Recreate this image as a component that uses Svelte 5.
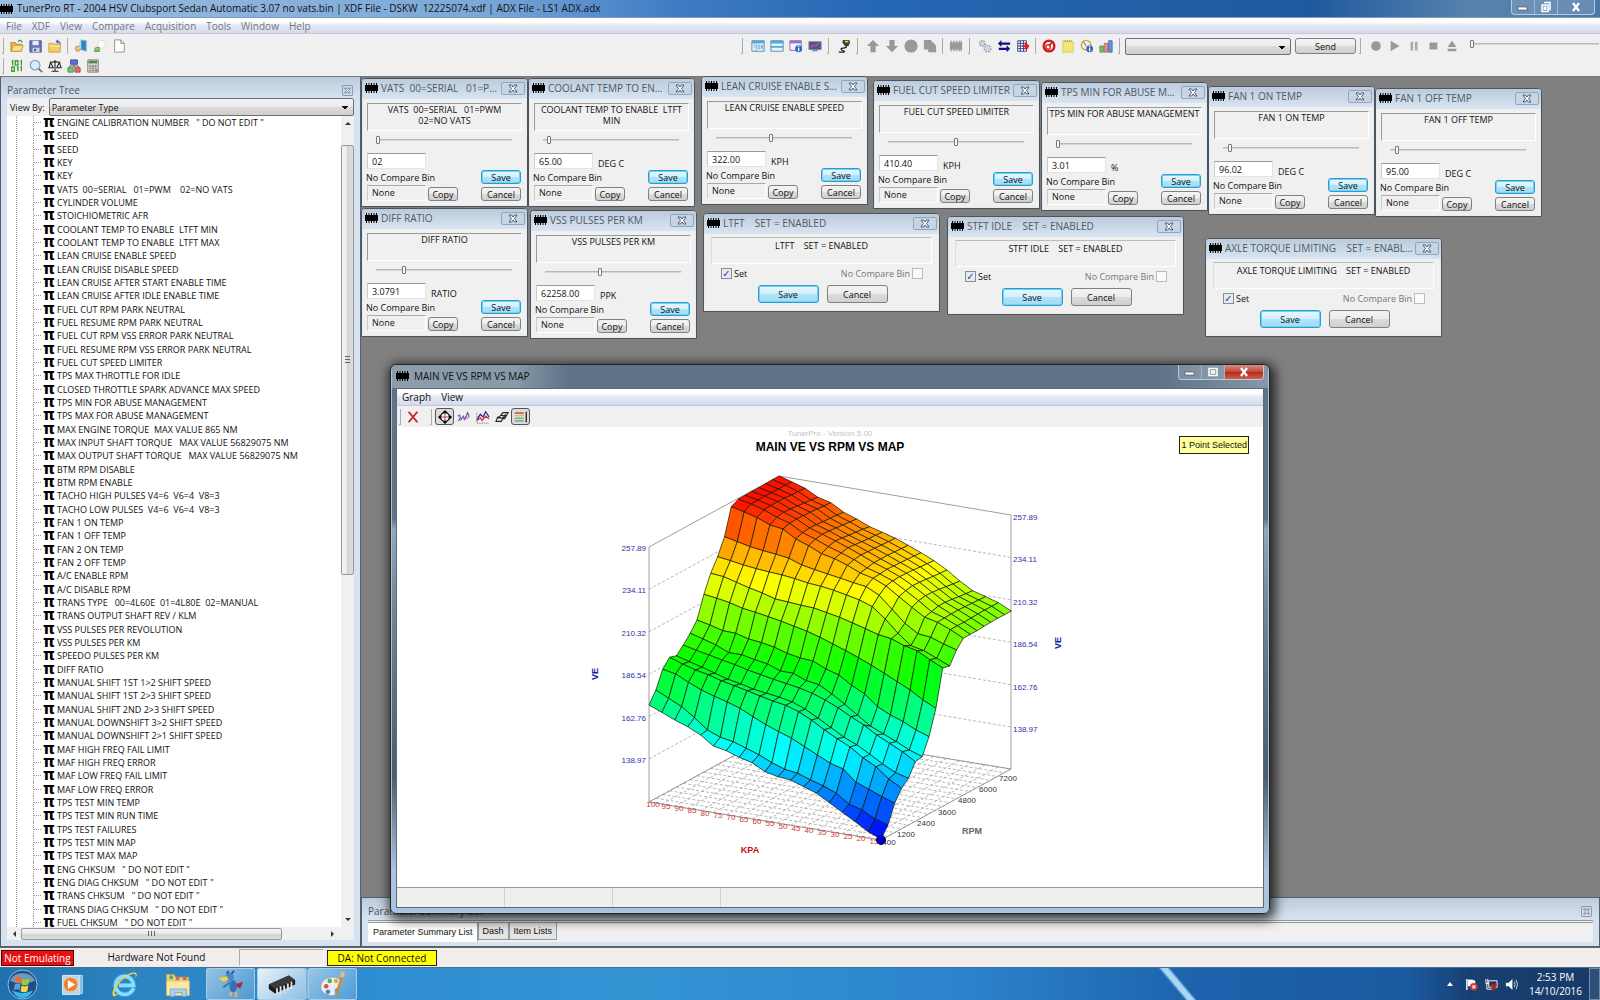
<script lang="ts">
	const menus = ['File', 'XDF', 'View', 'Compare', 'Acquisition', 'Tools', 'Window', 'Help'];

	const parameters = [
		'ENGINE CALIBRATION NUMBER   " DO NOT EDIT "',
		'SEED',
		'SEED',
		'KEY',
		'KEY',
		'VATS  00=SERIAL   01=PWM    02=NO VATS',
		'CYLINDER VOLUME',
		'STOICHIOMETRIC AFR',
		'COOLANT TEMP TO ENABLE  LTFT MIN',
		'COOLANT TEMP TO ENABLE  LTFT MAX',
		'LEAN CRUISE ENABLE SPEED',
		'LEAN CRUISE DISABLE SPEED',
		'LEAN CRUISE AFTER START ENABLE TIME',
		'LEAN CRUISE AFTER IDLE ENABLE TIME',
		'FUEL CUT RPM PARK NEUTRAL',
		'FUEL RESUME RPM PARK NEUTRAL',
		'FUEL CUT RPM VSS ERROR PARK NEUTRAL',
		'FUEL RESUME RPM VSS ERROR PARK NEUTRAL',
		'FUEL CUT SPEED LIMITER',
		'TPS MAX THROTTLE FOR IDLE',
		'CLOSED THROTTLE SPARK ADVANCE MAX SPEED',
		'TPS MIN FOR ABUSE MANAGEMENT',
		'TPS MAX FOR ABUSE MANAGEMENT',
		'MAX ENGINE TORQUE  MAX VALUE 865 NM',
		'MAX INPUT SHAFT TORQUE   MAX VALUE 56829075 NM',
		'MAX OUTPUT SHAFT TORQUE   MAX VALUE 56829075 NM',
		'BTM RPM DISABLE',
		'BTM RPM ENABLE',
		'TACHO HIGH PULSES V4=6  V6=4  V8=3',
		'TACHO LOW PULSES  V4=6  V6=4  V8=3',
		'FAN 1 ON TEMP',
		'FAN 1 OFF TEMP',
		'FAN 2 ON TEMP',
		'FAN 2 OFF TEMP',
		'A/C ENABLE RPM',
		'A/C DISABLE RPM',
		'TRANS TYPE   00=4L60E  01=4L80E  02=MANUAL',
		'TRANS OUTPUT SHAFT REV / KLM',
		'VSS PULSES PER REVOLUTION',
		'VSS PULSES PER KM',
		'SPEEDO PULSES PER KM',
		'DIFF RATIO',
		'MANUAL SHIFT 1ST 1>2 SHIFT SPEED',
		'MANUAL SHIFT 1ST 2>3 SHIFT SPEED',
		'MANUAL SHIFT 2ND 2>3 SHIFT SPEED',
		'MANUAL DOWNSHIFT 3>2 SHIFT SPEED',
		'MANUAL DOWNSHIFT 2>1 SHIFT SPEED',
		'MAF HIGH FREQ FAIL LIMIT',
		'MAF HIGH FREQ ERROR',
		'MAF LOW FREQ FAIL LIMIT',
		'MAF LOW FREQ ERROR',
		'TPS TEST MIN TEMP',
		'TPS TEST MIN RUN TIME',
		'TPS TEST FAILURES',
		'TPS TEST MIN MAP',
		'TPS TEST MAX MAP',
		'ENG CHKSUM   " DO NOT EDIT "',
		'ENG DIAG CHKSUM   " DO NOT EDIT "',
		'TRANS CHKSUM   " DO NOT EDIT "',
		'TRANS DIAG CHKSUM   " DO NOT EDIT "',
		'FUEL CHKSUM   " DO NOT EDIT "'
	];

	// Window positions are relative to the MDI desktop
	const scalars = [
		{ x: 0, y: 1, title: 'VATS  00=SERIAL   01=PWM    02=NO VATS', text: 'VATS  00=SERIAL   01=PWM\n02=NO VATS', pos: 0, value: '02', unit: '' },
		{ x: 167, y: 1, title: 'COOLANT TEMP TO ENABLE  LTFT MIN', text: 'COOLANT TEMP TO ENABLE  LTFT\nMIN', pos: 3, value: '65.00', unit: 'DEG C' },
		{ x: 340, y: -1, title: 'LEAN CRUISE ENABLE SPEED', text: 'LEAN CRUISE ENABLE SPEED', pos: 40, value: '322.00', unit: 'KPH' },
		{ x: 512, y: 3, title: 'FUEL CUT SPEED LIMITER', text: 'FUEL CUT SPEED LIMITER', pos: 50, value: '410.40', unit: 'KPH' },
		{ x: 680, y: 5, title: 'TPS MIN FOR ABUSE MANAGEMENT', text: 'TPS MIN FOR ABUSE MANAGEMENT', pos: 0, value: '3.01', unit: '%' },
		{ x: 847, y: 9, title: 'FAN 1 ON TEMP', text: 'FAN 1 ON TEMP', pos: 4, value: '96.02', unit: 'DEG C' },
		{ x: 1014, y: 11, title: 'FAN 1 OFF TEMP', text: 'FAN 1 OFF TEMP', pos: 4, value: '95.00', unit: 'DEG C' },
		{ x: 0, y: 131, title: 'DIFF RATIO', text: 'DIFF RATIO', pos: 20, value: '3.0791', unit: 'RATIO' },
		{ x: 169, y: 133, title: 'VSS PULSES PER KM', text: 'VSS PULSES PER KM', pos: 40, value: '62258.00', unit: 'PPK' }
	];

	const flags = [
		{ x: 342, y: 136, title: 'LTFT    SET = ENABLED' },
		{ x: 586, y: 139, title: 'STFT IDLE    SET = ENABLED' },
		{ x: 844, y: 161, title: 'AXLE TORQUE LIMITING    SET = ENABLED' }
	];

	// Screen height of every mesh node, one row per RPM step, one column per KPA step
	const mesh = [
		[855, 877, 900, 920, 945, 978, 992, 1012, 1028, 1055, 1070, 1080, 1100, 1120, 1148, 1177, 1205, 1235, 1258],
		[810, 835, 860, 893, 930, 952, 965, 985, 1004, 1028, 1048, 1060, 1080, 1098, 1120, 1153, 1170, 1197, 1215],
		[748, 762, 787, 810, 829, 846, 865, 890, 914, 935, 955, 980, 1005, 1030, 1047, 1087, 1108, 1130, 1150],
		[712, 732, 750, 764, 782, 797, 812, 828, 843, 856, 875, 900, 929, 956, 981, 1013, 1040, 1077, 1105],
		[707, 725, 742, 760, 778, 792, 808, 820, 832, 846, 868, 895, 923, 952, 975, 1003, 1032, 1058, 1075],
		[675, 691, 705, 720, 734, 750, 764, 778, 791, 804, 820, 840, 863, 890, 915, 945, 970, 995, 1025],
		[640, 657, 675, 698, 704, 719, 732, 753, 760, 782, 794, 822, 853, 886, 919, 942, 965, 990, 1010],
		[600, 615, 632, 640, 657, 668, 682, 700, 714, 723, 747, 765, 796, 822, 860, 885, 905, 930, 950],
		[523, 535, 548, 565, 577, 590, 604, 619, 634, 652, 672, 692, 713, 736, 760, 785, 810, 840, 865],
		[460, 470, 487, 504, 519, 537, 546, 556, 564, 578, 592, 609, 626, 644, 656, 677, 692, 719, 744],
		[410, 422, 435, 446, 456, 465, 476, 489, 499, 511, 525, 540, 560, 597, 640, 677, 692, 715, 738],
		[350, 365, 380, 392, 403, 415, 435, 449, 462, 475, 488, 500, 526, 568, 610, 641, 652, 672, 690],
		[260, 276, 293, 315, 327, 357, 377, 401, 416, 436, 459, 475, 498, 530, 562, 592, 607, 629, 655],
		[238, 252, 270, 292, 310, 338, 358, 380, 399, 419, 444, 462, 483, 512, 542, 575, 594, 617, 643],
		[226, 240, 257, 277, 297, 324, 343, 363, 383, 405, 428, 448, 470, 497, 527, 558, 582, 607, 632],
		[214, 229, 245, 267, 287, 314, 333, 354, 374, 395, 417, 438, 460, 487, 517, 547, 570, 594, 619],
		[203, 218, 235, 258, 277, 305, 324, 346, 365, 385, 406, 428, 450, 478, 508, 538, 560, 582, 607],
		[191, 207, 225, 249, 267, 295, 315, 337, 356, 375, 396, 418, 441, 469, 500, 530, 550, 570, 595],
		[179, 196, 215, 240, 258, 286, 306, 328, 346, 365, 386, 408, 431, 460, 492, 521, 540, 559, 584],
		[168, 186, 205, 232, 248, 277, 297, 320, 337, 355, 376, 398, 422, 450, 483, 512, 530, 548, 573]
	];
	const kpaSteps = 18;
	const rpmSteps = 19;

	function project(j: number, r: number) {
		const x = 207 + (696 * j) / kpaSteps + (391 * r) / rpmSteps;
		return { x: 183 + x / 3, y: mesh[r][j] / 3 - 7 };
	}

	function floorPoint(j: number, r: number) {
		return {
			x: 252 + (232 * j) / kpaSteps + (130 * r) / rpmSteps,
			y: 375 + (38 * j) / kpaSteps - (71 * r) / rpmSteps
		};
	}

	function cellColor(j: number, r: number) {
		let level = 0;
		for (const [a, b] of [[j, r], [j + 1, r], [j, r + 1], [j + 1, r + 1]]) {
			level += (floorPoint(a, b).y - project(a, b).y) / 254 / 4;
		}
		const hue = Math.round(240 * (1 - Math.min(1, Math.max(0, level - 0.01))));
		return `hsl(${hue}, 100%, 50%)`;
	}

	// Painter's order: back rows first
	const cells: { points: string; fill: string }[] = [];
	for (let r = rpmSteps - 1; r >= 0; r--) {
		for (let j = 0; j < kpaSteps; j++) {
			const corners = [project(j, r), project(j + 1, r), project(j + 1, r + 1), project(j, r + 1)];
			cells.push({
				points: corners.map((p) => `${p.x.toFixed(1)},${p.y.toFixed(1)}`).join(' '),
				fill: cellColor(j, r)
			});
		}
	}

	const floorLines = [
		...Array.from({ length: kpaSteps + 1 }, (_, j) => [floorPoint(j, 0), floorPoint(j, rpmSteps)]),
		...Array.from({ length: rpmSteps + 1 }, (_, r) => [floorPoint(0, r), floorPoint(kpaSteps, r)])
	];

	const ticks = ['257.89', '234.11', '210.32', '186.54', '162.76', '138.97'];
	const kpaLabels = Array.from({ length: 18 }, (_, i) => 100 - 5 * i);
	const rpmLabels = [1200, 2400, 3600, 4800, 6000, 7200];
</script>

{#snippet chip()}
	<svg class="chip" viewBox="0 0 13 10" aria-hidden="true">
		<path d="M0 2h13v6H0z" />
		<path d="M1.500 0v10M4 0v10M6.500 0v10M9 0v10M11.500 0v10" stroke="#000" stroke-dasharray="10" />
	</svg>
{/snippet}

{#snippet cross()}
	<svg class="cross" viewBox="0 0 10 9" aria-hidden="true">
		<path d="M1 1h2.500l1.500 2 1.500-2H9L6.500 4.500 9 8H6.500L5 6 3.500 8H1l2.500-3.500z" fill="#fff" stroke="#4c5a6c" />
	</svg>
{/snippet}

{#snippet caption(title: string)}
	<header class="caption">
		{@render chip()}
		<h2>{title}</h2>
		<button class="close" aria-label="Close">{@render cross()}</button>
	</header>
{/snippet}

<div class="app">
	<header class="titlebar">
		{@render chip()}
		<h1>TunerPro RT - 2004 HSV Clubsport Sedan Automatic 3.07 no vats.bin | XDF File - DSKW  12225074.xdf | ADX File - LS1 ADX.adx</h1>
		<div class="sysbuttons">
			<button aria-label="Minimize"><svg viewBox="0 0 12 12"><rect x="1" y="6" width="9" height="3" fill="#fff" stroke="#445" stroke-width=".6" /></svg></button>
			<button aria-label="Restore"><svg viewBox="0 0 12 12"><path d="M4 1.500h6v7H8M2 4h6v6.500H2z M4.200 6.200h1.600v2H4.200z" fill="none" stroke="#fff" stroke-width="1.500" /></svg></button>
			<button class="wide" aria-label="Close"><svg viewBox="0 0 12 12"><path d="M3 2l6 8M9 2l-6 8" stroke="#fff" stroke-width="2.200" /></svg></button>
		</div>
	</header>

	<nav class="menubar">
		{#each menus as item}
			<button>{item}</button>
		{/each}
	</nav>

	<div class="toolbars">
		<div class="toolrow">
			<div class="tools">
				<i class="grip"></i>
				<button aria-label="Open bin"><svg viewBox="0 0 16 16"><path d="M1 14V4h5l1 2h6v8z" fill="#e9b84a" stroke="#b98a2c" /><path d="M1 14l3-7h11l-2 7z" fill="#fbdc86" stroke="#c29434" /><path d="M9 3c2-2 4-2 5 1" fill="none" stroke="#4c9a44" stroke-width="1.500" /></svg></button>
				<button aria-label="Save bin"><svg viewBox="0 0 16 16"><path d="M1 2h13v13H1z" fill="#6c74b8" stroke="#4c5590" /><path d="M4 2h7v5H4z" fill="#e6ebf7" /><path d="M4 10h8v5H4z" fill="#cdd3e8" /><path d="M6 11h2v3H6z" fill="#444d88" /></svg></button>
				<button aria-label="Close bin"><svg viewBox="0 0 16 16"><path d="M1 5h5l1 1h7v9H1z" fill="#f6cd69" stroke="#c6983c" /><path d="M1 8h13" stroke="#fff1b8" /><path d="M14 6c0-3-2-4-4-3l1-2M10 3l2 2" fill="none" stroke="#4a55b0" stroke-width="1.300" /></svg></button>
				<i class="sep"></i>
				<button aria-label="Select XDF"><svg viewBox="0 0 16 16"><path d="M8 1l6 1v12l-6-2z" fill="#2f86c4" stroke="#7fb2d8" /><circle cx="4.500" cy="11" r="3" fill="#f0c078" stroke="#b88a50" /><path d="M7 3v8" stroke="#b8d6ec" stroke-width="2" /></svg></button>
				<button aria-label="Reload"><svg viewBox="0 0 16 16"><circle cx="10" cy="6" r="4.500" fill="#fafafa" stroke="#ccc" stroke-dasharray="2 1" /><path d="M2 14c0-4 2-5 5-4v4zM4 12h2" fill="#cfe4c4" stroke="#6aa84f" stroke-width="1.500" /></svg></button>
				<button aria-label="New"><svg viewBox="0 0 16 16"><path d="M3 1h7l4 4v10H3z" fill="#fff" stroke="#888" /><path d="M10 1v4h4" fill="none" stroke="#888" /></svg></button>
			</div>
			<div class="tools right">
				<i class="grip"></i>
				<button aria-label="Parameter tree"><svg viewBox="0 0 16 16"><path d="M1 2h14v12H1z" fill="#e8f3fb" stroke="#3f86b8" /><path d="M1 2h14v3H1z" fill="#5ba4d6" /><path d="M6 5v9M3 7h2M3 9h2M8 7h2v4H8zM12 7h1v4h-1z" stroke="#7aa9cc" fill="none" /></svg></button>
				<button aria-label="Parameter list"><svg viewBox="0 0 16 16"><path d="M1 2h14v12H1z" fill="#e8f3fb" stroke="#3f86b8" /><path d="M1 2h14v3H1zM1 8h14v2H1z" fill="#5ba4d6" /></svg></button>
				<button aria-label="Item info"><svg viewBox="0 0 16 16"><path d="M1 2h13v11H1z" fill="#f6f2fa" stroke="#8a62b8" /><path d="M1 2h13v3H1z" fill="#9d6cc9" /><circle cx="11" cy="11" r="4" fill="#2b6ac4" /><path d="M11 8v1M11 10v4" stroke="#fff" stroke-width="1.500" /></svg></button>
				<button aria-label="Monitor"><svg viewBox="0 0 16 16"><path d="M1 3h14v9H1z" fill="#4a5590" stroke="#7d88b0" /><path d="M3 10l3-3 3 1 4-4" fill="none" stroke="#d84a70" stroke-width="1.500" /><path d="M6 12h4l2 2H4z" fill="#888" /></svg></button>
				<i class="grip"></i>
				<button aria-label="Connect"><svg viewBox="0 0 16 16"><path d="M7 1h7l1 3-2 4H9L6 4z" fill="#3f3c28" /><path d="M9 3h4" stroke="#d8c860" stroke-width="2" /><path d="M11 8c0 4-8 1-6 4s4 0 3 3H2" fill="none" stroke="#222" stroke-width="1.500" /></svg></button>
				<i class="grip"></i>
				<button aria-label="Upload"><svg viewBox="0 0 16 16"><path d="M8 1l7 7h-4v7H5V8H1z" fill="#999" /></svg></button>
				<button aria-label="Download"><svg viewBox="0 0 16 16"><path d="M8 15l7-7h-4V1H5v7H1z" fill="#999" /></svg></button>
				<button aria-label="Verify"><svg viewBox="0 0 16 16"><circle cx="8" cy="8" r="7.500" fill="#999" /></svg></button>
				<button aria-label="Copy bin"><svg viewBox="0 0 16 16"><path d="M1 1h8l2 3h1l3 4v7H6v-3H1z" fill="#999" /></svg></button>
				<i class="sep"></i>
				<button aria-label="Emulator"><svg viewBox="0 0 16 16"><path d="M1 4h14v8H1z" fill="#999" /><path d="M2.500 2v12M5.500 2v12M8.500 2v12M11.500 2v12M14 2v12" stroke="#999" stroke-width="1.500" /></svg></button>
				<i class="grip"></i>
				<button aria-label="Settings"><svg viewBox="0 0 16 16"><circle cx="5" cy="5" r="3" fill="none" stroke="#8fa3bb" stroke-width="2" stroke-dasharray="2 1" /><circle cx="11" cy="11" r="3.500" fill="none" stroke="#8fa3bb" stroke-width="2" stroke-dasharray="2 1" /><circle cx="5" cy="5" r="2" fill="#c4d4e6" /><circle cx="11" cy="11" r="2" fill="#c4d4e6" /></svg></button>
				<button aria-label="Swap"><svg viewBox="0 0 16 16"><path d="M1 5l4-4v3h10v2.500H5V9zM15 11l-4-4v3H2v2.500h9V15z" fill="#10107c" /></svg></button>
				<button aria-label="Goto address"><svg viewBox="0 0 16 16"><path d="M2 2h10v12H2zM2 5h10M2 8h10M2 11h10M5 2v12M8.500 2v12" fill="#fff" stroke="#223a8c" /><path d="M7 8h8M11 4v8M13 6v5" stroke="#e02020" stroke-width="2" /></svg></button>
				<i class="sep"></i>
				<button aria-label="Stop acquisition"><svg viewBox="0 0 16 16"><circle cx="8" cy="8" r="6" fill="#fff" stroke="#d02020" stroke-width="3" /><circle cx="7" cy="9" r="2.500" fill="none" stroke="#d02020" stroke-width="1.500" /><path d="M8 8l4-5" stroke="#d02020" stroke-width="2" /></svg></button>
				<button aria-label="Notes"><svg viewBox="0 0 16 16"><path d="M2 3h12v12H2z" fill="#f4e678" stroke="#dccb50" /><path d="M3 2h10" stroke="#a89a40" stroke-width="2" stroke-dasharray="1 1" /></svg></button>
				<button aria-label="Gauges"><svg viewBox="0 0 16 16"><circle cx="7" cy="7" r="5.500" fill="#f6efe0" stroke="#cfa040" stroke-width="1.500" /><path d="M7 8L4 3" stroke="#555" /><circle cx="11" cy="11" r="4" fill="#3a6cb4" /><path d="M11 8v1M11 10v4" stroke="#fff" stroke-width="1.500" /></svg></button>
				<button aria-label="Histogram"><svg viewBox="0 0 16 16"><path d="M1 8h4v7H1z" fill="#86b86a" stroke="#5d8f48" /><path d="M6 5h4v10H6z" fill="#e09090" stroke="#b06060" /><path d="M11 2h4v13h-4z" fill="#6c94d8" stroke="#3f68b0" /></svg></button>
				<i class="grip"></i>
				<select class="combo command" aria-label="Command"><option></option></select>
				<button class="push send">Send</button>
				<i class="grip"></i>
				<button aria-label="Record"><svg viewBox="0 0 16 16"><circle cx="8" cy="8" r="5.500" fill="#999" /></svg></button>
				<button aria-label="Play"><svg viewBox="0 0 16 16"><path d="M3 2l10 6-10 6z" fill="#999" /></svg></button>
				<button aria-label="Pause"><svg viewBox="0 0 16 16"><path d="M4 3h3v10H4zM9 3h3v10H9z" fill="#aaa" /></svg></button>
				<button aria-label="Stop"><svg viewBox="0 0 16 16"><path d="M4 4h9v8H4z" fill="#999" /></svg></button>
				<button aria-label="Eject"><svg viewBox="0 0 16 16"><path d="M8 2l5 7H3zM3 11h10v3H3z" fill="#999" /></svg></button>
				<input class="seek" type="range" value="0" aria-label="Log position" />
			</div>
		</div>
		<div class="toolrow">
			<div class="tools">
				<i class="grip"></i>
				<button aria-label="Hex editor"><svg viewBox="0 0 16 16"><path d="M2 3l1-1v5M6 2h3v5H6zM12 3l1-1v5M2 9h3v5H2zM8 10l1-1v5M12 10l1-1v5" fill="none" stroke="#3d9a30" stroke-width="1.500" /></svg></button>
				<button aria-label="Find"><svg viewBox="0 0 16 16"><circle cx="7" cy="7" r="5.500" fill="#d6ecf8" stroke="#88a4b8" stroke-width="1.500" /><path d="M11 11l4 4" stroke="#777" stroke-width="2" /></svg></button>
				<button aria-label="Compare"><svg viewBox="0 0 16 16"><path d="M8 1v13M4 14h8M2 4l6-1 6 1M3 4l-2 6h5zM13 4l-3 6h5z" fill="none" stroke="#222" stroke-width="1.200" /></svg></button>
				<button aria-label="Categories"><svg viewBox="0 0 16 16"><path d="M8 6v4M3 10V8h10v2" fill="none" stroke="#555" /><path d="M4 1h8v5H4z" fill="#5873d8" stroke="#3a50a8" /><path d="M1 10h6v5H1z" fill="#72c47a" stroke="#3f8f48" /><path d="M9 10h6v5H9z" fill="#e07070" stroke="#a84040" /></svg></button>
				<button aria-label="Calculator"><svg viewBox="0 0 16 16"><path d="M2 1h12v14H2z" fill="#dcd8c8" stroke="#777" /><path d="M3 2h10v3H3z" fill="#4c8a50" /><path d="M4 8h8M4 10.500h8M4 13h8" stroke="#777" stroke-width="1.500" stroke-dasharray="2 1" /><path d="M11 12h2v2h-2z" fill="#c05050" /></svg></button>
			</div>
		</div>
	</div>

	<main>
		<aside class="tree-panel">
			<header class="dock-caption">
				<h2>Parameter Tree</h2>
				<button class="dock-close" aria-label="Close panel">{@render cross()}</button>
			</header>
			<div class="view-by">
				<label for="view-by">View By:</label>
				<select id="view-by" class="combo"><option>Parameter Type</option></select>
			</div>
			<div class="tree-body">
				<ul>
					{#each parameters as name}
						<li><i class="branch"></i><b>π</b><span>{name}</span></li>
					{/each}
				</ul>
				<div class="vscroll">
					<button aria-label="Scroll up"><svg viewBox="0 0 6 6"><path d="M0 5l3-3 3 3z" /></svg></button>
					<div class="vthumb"></div>
					<button aria-label="Scroll down"><svg viewBox="0 0 6 6"><path d="M0 1l3 3 3-3z" /></svg></button>
				</div>
			</div>
			<div class="hscroll">
				<button aria-label="Scroll left"><svg viewBox="0 0 6 6"><path d="M5 0L2 3l3 3z" /></svg></button>
				<div class="hthumb"></div>
				<button aria-label="Scroll right"><svg viewBox="0 0 6 6"><path d="M1 0l3 3-3 3z" /></svg></button>
			</div>
		</aside>

		<section class="workspace">
			<div class="desktop">
				{#each scalars as item, i}
					<section class="window" style:left="{item.x}px" style:top="{item.y}px">
						{@render caption(item.title)}
						<p class="description">{item.text}</p>
						<input class="slider" type="range" value={item.pos} aria-label={item.title} />
						<div class="scalar-form">
							<input class="value" id="value-{i}" value={item.value} />
							<label class="unit" for="value-{i}">{item.unit}</label>
							<span class="compare">No Compare Bin</span>
							<button class="push primary">Save</button>
							<div class="compare-row">
								<span class="none">None</span>
								<button class="push copy">Copy</button>
							</div>
							<button class="push cancel">Cancel</button>
						</div>
					</section>
				{/each}

				{#each flags as item}
					<section class="window flag" style:left="{item.x}px" style:top="{item.y}px">
						{@render caption(item.title)}
						<p class="description">{item.title}</p>
						<div class="checks">
							<label><input type="checkbox" checked /> Set</label>
							<label class="off">No Compare Bin <input type="checkbox" disabled /></label>
						</div>
						<div class="actions">
							<button class="push primary">Save</button>
							<button class="push">Cancel</button>
						</div>
					</section>
				{/each}

				<section class="graph-window">
					<header class="graph-caption">
						{@render chip()}
						<h2>MAIN VE VS RPM VS MAP</h2>
						<div class="sysbuttons">
							<button aria-label="Minimize"><svg viewBox="0 0 12 12"><rect x="1" y="6" width="9" height="3" fill="#fff" stroke="#445" stroke-width=".6" /></svg></button>
							<button aria-label="Maximize"><svg viewBox="0 0 12 12"><path d="M2 2.500h8v7H2zM4.500 5h3v2h-3z" fill="none" stroke="#fff" stroke-width="1.500" /></svg></button>
							<button class="wide red" aria-label="Close"><svg viewBox="0 0 12 12"><path d="M3 2l6 8M9 2l-6 8" stroke="#fff" stroke-width="2.200" /></svg></button>
						</div>
					</header>
					<div class="graph-client">
						<nav class="graph-menu">
							<button>Graph</button>
							<button>View</button>
						</nav>
						<div class="graph-tools tools">
							<i class="grip"></i>
							<button class="exit" aria-label="Close graph"><svg viewBox="0 0 16 16"><path d="M3 2l10 12M13 2L3 14" stroke="#d02020" stroke-width="2.200" /></svg></button>
							<i class="grip"></i>
							<button class="pressed" aria-label="Rotate"><svg viewBox="0 0 16 16"><circle cx="8" cy="8" r="5" fill="#fff" stroke="#000" stroke-width="1.500" /><path d="M8 3v10M3 8h10" stroke="#a03030" /><path d="M8 0l3 3H5zM8 16l3-3H5zM0 8l3-3v6zM16 8l-3-3v6z" /></svg></button>
							<button aria-label="Points"><svg viewBox="0 0 16 16"><path d="M1 7l2-1 1 3-2 3M4 12l3-5 2 4 3-8 2 5" fill="none" stroke="#5a5ac0" stroke-width="1.300" /><path d="M1 13l3-4M7 11l3-4 2 3 2-7" fill="none" stroke="#b05080" stroke-dasharray="3 1" /></svg></button>
							<button aria-label="Lines"><svg viewBox="0 0 16 16"><path d="M1 11l4-6 3 3 3-6 4 6" fill="none" stroke="#2a2a90" stroke-width="1.500" /><path d="M1 12l4-3 2 3 4-5 4 3" fill="none" stroke="#d03030" stroke-width="1.500" /><path d="M1 15h14M1 3v12" stroke="#555" stroke-dasharray="1 1" /></svg></button>
							<button aria-label="Surface"><svg viewBox="0 0 16 16"><path d="M1 13h6l2-3 2 0 4-7H9L5 8H3zM3 9h8M6 6l7 1M7 13l5-8" fill="none" stroke="#222" stroke-width="1.200" /></svg></button>
							<button class="pressed" aria-label="Colors"><svg viewBox="0 0 16 16"><path d="M1 3.500h10" stroke="#c03030" stroke-width="1.500" /><path d="M1 6.500h10" stroke="#e0c040" stroke-width="1.500" /><path d="M1 9.500h10" stroke="#60c050" stroke-width="1.500" /><path d="M1 12.500h10" stroke="#50a0a0" stroke-width="1.500" /><path d="M14 2v12" stroke="#222" stroke-width="1.500" /></svg></button>
						</div>
						<div class="plot">
							<span class="selection">1 Point Selected</span>
							<svg viewBox="0 0 866 460" role="img" aria-label="MAIN VE VS RPM VS MAP">
								<text class="version" x="433" y="9">TunerPro - Version 5.00</text>
								<text class="title" x="433" y="24">MAIN VE VS RPM VS MAP</text>

								<g class="dashed">
									{#each floorLines as [from, to]}
										<line x1={from.x} y1={from.y} x2={to.x} y2={to.y} />
									{/each}
									{#each ticks as _, i}
										{#if i > 0}
											<polyline points="252,{120 + 42.4 * i} 382,{49 + 42.4 * i} 614,{88 + 42.4 * i}" />
										{/if}
									{/each}
								</g>
								<path class="frame" d="M252 375V120L382 49l232 39v254M252 375l232 38 130-71-232-38z" />

								<g class="surface">
									{#each cells as cell}
										<polygon points={cell.points} fill={cell.fill} />
									{/each}
								</g>

								{#each ticks as tick, i}
									<text class="tick end" x="249" y={124 + Math.round(42.4 * i)}>{tick}</text>
									<text class="tick" x="616" y={93 + Math.round(42.4 * i)}>{tick}</text>
								{/each}
								{#each kpaLabels as kpa, i}
									<text class="kpa" x={256 + 13 * i} y={380 + Math.round(2.15 * i)}>{kpa}</text>
								{/each}
								<text class="rpm" x="492" y="418">400</text>
								{#each rpmLabels as rpm, i}
									<text class="rpm" x={509 + Math.round(20.4 * i)} y={410 - Math.round(11.2 * i)}>{rpm}</text>
								{/each}
								<circle cx="484" cy="413" r="4.500" fill="#0000c8" stroke="#000040" />
								<text class="axis kpa-axis" x="353" y="426">KPA</text>
								<text class="axis rpm-axis" x="575" y="407">RPM</text>
								<text class="axis ve-axis" transform="translate(201 247) rotate(-90)">VE</text>
								<text class="axis ve-axis" transform="translate(664 216) rotate(-90)">VE</text>
							</svg>
						</div>
						<div class="graph-status"><i></i><i></i><i></i></div>
					</div>
				</section>
			</div>

			<section class="summary-panel">
				<header class="dock-caption">
					<h2>Parameter Summary List</h2>
					<button class="dock-close" aria-label="Close panel">{@render cross()}</button>
				</header>
				<div class="tabs">
					<button class="active">Parameter Summary List</button>
					<button>Dash</button>
					<button>Item Lists</button>
				</div>
			</section>
		</section>
	</main>

	<footer class="statusbar">
		<span class="emulating">Not Emulating</span>
		<span class="hardware">Hardware Not Found</span>
		<span class="blank"></span>
		<span class="da">DA: Not Connected</span>
	</footer>

	<footer class="taskbar">
		<button class="start" aria-label="Start">
			<svg viewBox="0 0 32 32">
				<circle cx="16" cy="16" r="15" fill="#1d4f86" stroke="#8cc4ea" />
				<path d="M3 12a14 12 0 0 1 26 0q-13 6-26 0z" fill="#9ab8cc" opacity=".7" />
				<path d="M5 22q11 6 22 0-4 8-11 8T5 22z" fill="#38b8e8" />
				<path d="M9 9q3-2 6 0l-1 6q-3-2-6 0z" fill="#ef6a2e" />
				<path d="M16 10q3 2 7 0l-1 6q-4 2-7 0z" fill="#9cc83c" />
				<path d="M8 16q3-2 6 0l-1 6q-3-2-6 0z" fill="#4fa4e0" />
				<path d="M15 17q3 2 7 0l-1 6q-4 2-7 0z" fill="#fcd144" />
			</svg>
		</button>
		<button aria-label="Media Player">
			<svg viewBox="0 0 32 32"><path d="M10 6h18v20H10z" fill="#7fb6dc" stroke="#b8daf0" /><path d="M6 6h19v21H6z" fill="#b8d4ea" stroke="#dcecf8" /><circle cx="15" cy="16" r="8" fill="#f08030" stroke="#fbd0a8" /><path d="M12 11l8 5-8 5z" fill="#fff" /></svg>
		</button>
		<button aria-label="Internet Explorer">
			<svg viewBox="0 0 32 32"><path d="M26 20c-2 5-6 7-10 7-6 0-10-5-10-10S10 7 16 7s10 5 10 10H10" fill="none" stroke="#2c9ae0" stroke-width="6" /><path d="M26 20c-2 5-6 7-10 7-6 0-10-5-10-10S10 7 16 7s10 5 10 10H10" fill="none" stroke="#8cdcfc" stroke-width="4" /><path d="M3 28C1 22 12 6 24 3c6-1 7 2 4 6 2-6-3-6-9-2C12 11 6 19 5 25c0 2 2 2 4 1-2 3-5 4-6 2z" fill="#f6d24c" /></svg>
		</button>
		<button aria-label="Explorer">
			<svg viewBox="0 0 32 32"><path d="M4 5h8l2 3h14v20H4z" fill="#f0d080" stroke="#c8a450" /><path d="M7 6h4v4H7z" fill="#5aa860" /><path d="M14 8h4v3h-4zM22 8h4v3h-4z" fill="#d86050" /><path d="M4 12h25v16H4z" fill="#fbe7a6" stroke="#d8b860" /><path d="M8 29v-8h18v8h-5v-4h-8v4z" fill="#a8d4f0" stroke="#78a8cc" /></svg>
		</button>
		<button class="running" aria-label="Pidgin">
			<svg viewBox="0 0 32 32"><path d="M18 14l6 1 6-2-3 7-6-2z" fill="#a82848" /><ellipse cx="19" cy="18" rx="4" ry="7" fill="#3a70b8" /><circle cx="15" cy="8" r="5" fill="#4a88cc" /><path d="M12 4l2-3M17 4l3-3" stroke="#285090" stroke-width="2" fill="none" /><path d="M3 9l9-2 2 4-6 2z" fill="#f6d430" /><path d="M15 14l-7 5" stroke="#3a70b8" stroke-width="2" /><path d="M17 24l-1 5M22 24l0 6" stroke="#d8b088" stroke-width="3" /></svg>
		</button>
		<button class="running current" aria-label="TunerPro">
			<svg viewBox="0 0 32 32"><path d="M2 16L24 6l7 5v5L9 26l-7-5z" fill="#181818" /><path d="M2 16L24 6l7 5L9 21z" fill="#3a3a3a" /><path d="M11 20v8M15 18v9M19 17v8M23 15v8M27 13v8" stroke="#e4e4e4" stroke-width="2" /></svg>
		</button>
		<button class="running" aria-label="Paint">
			<svg viewBox="0 0 32 32"><path d="M3 19c0-8 8-12 16-11 8 1 9 9 5 11s-6 1-5 5-2 5-6 4S3 25 3 19z" fill="#e8eef4" stroke="#8ca0b4" /><circle cx="9" cy="18" r="2.500" fill="#d85050" /><circle cx="13" cy="12" r="2.500" fill="#60a858" /><circle cx="20" cy="12" r="2.500" fill="#e0b040" /><circle cx="11" cy="24" r="2.500" fill="#4c80d0" /><path d="M28 3l-8 25" stroke="#c88848" stroke-width="3" /><path d="M28 2l-2 6" stroke="#e8b888" stroke-width="4" /></svg>
		</button>
		<div class="tray">
			<svg class="up" viewBox="0 0 8 8"><path d="M1 6l3-4 3 4z" fill="#fff" /></svg>
			<svg viewBox="0 0 14 14"><path d="M2 1v12" stroke="#fff" stroke-width="1.500" /><path d="M3 2q4-1 8 1v6H3z" fill="#fff" /><circle cx="9.500" cy="9.500" r="4" fill="#d03838" /><path d="M8 8l3 3M11 8l-3 3" stroke="#fff" stroke-width="1.300" /></svg>
			<svg viewBox="0 0 14 14"><path d="M4 3h9v7H4z" fill="#28384c" stroke="#fff" /><path d="M1 1v5h3M3 1v5M2 6v6h6" stroke="#fff" fill="none" /><path d="M7 7l5 5M12 7l-5 5" stroke="#c82020" stroke-width="2.500" /></svg>
			<svg viewBox="0 0 14 14"><path d="M1 5h3l4-4v12L4 9H1z" fill="#fff" /><path d="M10 4q2 3 0 6M12 2q3 5 0 10" stroke="#c8dcf0" fill="none" /></svg>
			<div class="clock"><span>2:53 PM</span><span>14/10/2016</span></div>
			<button class="show-desktop" aria-label="Show desktop"></button>
		</div>
	</footer>
</div>

<style>
	:global(body) {
		margin: 0;
	}

	.app {
		display: flex;
		flex-direction: column;
		height: 100vh;
		overflow: hidden;
		background: #f0f0f0;
		color: #111;
		font: 9px/11px 'Open Sans', 'Noto Sans', sans-serif;
	}

	.app * {
		box-sizing: border-box;
	}

	h1,
	h2,
	p,
	ul {
		margin: 0;
		padding: 0;
		font-size: inherit;
		font-weight: 400;
	}

	button,
	input,
	select {
		margin: 0;
		padding: 0;
		border: 0;
		background: none;
		color: inherit;
		font: inherit;
	}

	.chip {
		flex: none;
		width: 13px;
		height: 10px;
	}

	.cross {
		width: 10px;
		height: 9px;
	}

	/* main caption and menu */
	.titlebar {
		display: flex;
		align-items: center;
		flex: none;
		height: 18px;
		gap: 4px;
		background: linear-gradient(90deg, #9cbde0, #7ba8d8 30%, #3f7cc4 42%, #2467b4 55%, #1f5a9e 82%, #5983ae 92%, #4a78a8);
		border-bottom: 1px solid #7d9dc0;
	}

	.titlebar h1 {
		font-size: 10px;
		line-height: 17px;
		white-space: pre;
	}

	.sysbuttons {
		display: flex;
		align-self: flex-start;
		height: 15px;
		margin-left: auto;
		margin-right: 5px;
		border: 1px solid #b8cce0;
		border-top: 0;
		border-radius: 0 0 4px 4px;
		overflow: hidden;
	}

	.sysbuttons button {
		display: flex;
		align-items: center;
		justify-content: center;
		width: 23px;
		background: rgba(255, 255, 255, 0.15);
		border-right: 1px solid #9db6d0;
	}

	.sysbuttons .wide {
		width: 36px;
		border-right: 0;
	}

	.sysbuttons svg {
		width: 12px;
		height: 12px;
	}

	.menubar {
		display: flex;
		flex: none;
		height: 16px;
		gap: 10px;
		padding: 2px 0 0 6px;
		background: linear-gradient(#fff 25%, #e4e8f4 50%, #d5dbee);
		border-bottom: 1px solid #c4c8d4;
		color: #777;
		font-size: 10px;
	}

	/* toolbars */
	.toolbars {
		flex: none;
		height: 43px;
		padding-top: 2px;
		background: #f0f0f0;
		border-bottom: 1px solid #777;
	}

	.toolrow {
		display: flex;
		height: 20px;
	}

	.tools {
		display: flex;
		align-items: center;
	}

	.tools button {
		display: flex;
		align-items: center;
		justify-content: center;
		flex: none;
		width: 19px;
		height: 18px;
	}

	.tools svg {
		width: 14px;
		height: 14px;
	}

	.tools.right {
		flex: 1;
		margin-left: 610px;
	}

	.grip,
	.sep {
		flex: none;
		width: 2px;
		height: 16px;
		margin: 0 3px 0 2px;
		border-right: 1px solid #aaa;
	}

	.grip {
		border-bottom: 1px solid #aaa;
	}

	.right .grip {
		margin: 0 5px 0 3px;
	}

	.combo {
		appearance: none;
		border: 1px solid #707070;
		border-radius: 2px;
		background:
			linear-gradient(45deg, transparent 50%, #000 50%) right 8px top 7px / 4px 3px no-repeat,
			linear-gradient(-45deg, transparent 50%, #000 50%) right 4px top 7px / 4px 3px no-repeat,
			linear-gradient(#f2f2f2, #ebebeb 50%, #dcdcdc 50%, #cfcfcf);
	}

	.command {
		width: 166px;
		height: 17px;
		margin-right: 4px;
	}

	.push {
		height: 14px;
		border: 1px solid #808080;
		border-radius: 3px;
		background: linear-gradient(#f4f4f4, #ececec 50%, #dcdcdc 50%, #d0d0d0);
		line-height: 11px;
		text-align: center;
	}

	.push.primary {
		border-color: #2c9ccc;
		background: linear-gradient(#e8f8ff, #d0f0fd 50%, #b0e4fa 50%, #a0dcf6);
		box-shadow: inset 0 0 0 1px #70d4f4;
	}

	.tools .send {
		width: 61px;
		height: 16px;
	}

	input[type='range'] {
		appearance: none;
		display: block;
		height: 9px;
		background: linear-gradient(#aaa, #e4e4e4) center / 100% 2px no-repeat;
	}

	input[type='range']::-webkit-slider-thumb {
		appearance: none;
		width: 4px;
		height: 8px;
		border: 1px solid #777;
		border-radius: 1px;
		background: #fafafa;
	}

	.seek {
		flex: 1;
		margin: 0 6px 4px 9px;
	}

	main {
		display: flex;
		flex: 1;
		min-height: 0;
	}

	/* docked panels */
	.tree-panel {
		display: flex;
		flex-direction: column;
		width: 361px;
		flex: none;
		padding: 0 6px 6px;
		border: 1px solid #55606c;
		border-top: 0;
		background: #d6e2f0;
	}

	.dock-caption {
		display: flex;
		align-items: center;
		justify-content: space-between;
		flex: none;
		height: 21px;
		margin: 0 -6px;
		padding: 5px 7px 0 6px;
		background: linear-gradient(#bccbdc, #d6e2f0);
		color: #4c5560;
		font-size: 10px;
	}

	.dock-close {
		display: flex;
		align-items: center;
		justify-content: center;
		width: 11px;
		height: 11px;
		border: 1px solid #8c9cb0;
		border-radius: 1px;
	}

	.dock-close .cross {
		width: 7px;
		height: 7px;
	}

	.view-by {
		display: flex;
		align-items: center;
		gap: 4px;
		height: 18px;
		flex: none;
		padding-left: 3px;
		background: #f0f0f0;
	}

	.view-by select {
		flex: 1;
		height: 18px;
		padding-left: 2px;
	}

	.tree-body {
		display: flex;
		flex: 1;
		min-height: 0;
		background: #fff;
	}

	.tree-body ul {
		display: flex;
		flex-direction: column;
		flex: 1;
		min-width: 0;
		margin: 0 0 -2px 9px;
		border-left: 1px dotted #999;
		list-style: none;
	}

	.tree-body li {
		display: flex;
		align-items: center;
		flex: 1;
		min-height: 0;
		margin-left: 16px;
		border-left: 1px dotted #999;
		line-height: 13px;
		white-space: pre;
	}

	.branch {
		width: 7px;
		border-top: 1px dotted #999;
	}

	.tree-body b {
		width: 16px;
		color: #000;
		font: bold 15px/13px 'DejaVu Sans', sans-serif;
		text-align: center;
		flex: none;
	}

	.vscroll {
		display: flex;
		flex-direction: column;
		width: 13px;
		background: #f0f0f0;
	}

	.vscroll button {
		height: 14px;
		flex: none;
	}

	.vscroll svg,
	.hscroll svg {
		display: block;
		width: 6px;
		height: 6px;
		margin: auto;
		fill: #333;
	}

	.vthumb {
		flex: none;
		height: 53%;
		margin: 15px 0 auto;
		border: 1px solid #999;
		border-radius: 2px;
		background:
			repeating-linear-gradient(#666 0 1px, transparent 1px 3px) center / 5px 7px no-repeat,
			linear-gradient(90deg, #f4f4f4, #e8e8e8 50%, #d4d4d4 50%, #dcdcdc);
	}

	.hscroll {
		display: flex;
		align-items: center;
		height: 13px;
		flex: none;
		padding-right: 14px;
		background: #f0f0f0;
	}

	.hscroll button {
		width: 14px;
	}

	.hthumb {
		width: 261px;
		height: 12px;
		margin-right: auto;
		border: 1px solid #999;
		border-radius: 2px;
		background:
			repeating-linear-gradient(90deg, #666 0 1px, transparent 1px 3px) center / 7px 5px no-repeat,
			linear-gradient(#f4f4f4, #e8e8e8 50%, #d4d4d4 50%, #dcdcdc);
	}

	.workspace {
		display: flex;
		flex-direction: column;
		flex: 1;
		min-width: 0;
	}

	.desktop {
		position: relative;
		z-index: 1;
		flex: 1;
		background: #808080;
	}

	/* MDI child windows */
	.window {
		position: absolute;
		width: 167px;
		height: 129px;
		padding: 0 5px;
		border: 1px solid #4c555e;
		border-radius: 4px 4px 0 0;
		background: #f0f0f0;
		box-shadow: inset 0 0 0 1px #e4ecf4;
	}

	.caption {
		display: flex;
		align-items: center;
		height: 20px;
		margin: 0 -5px 4px;
		padding: 0 2px 2px 3px;
		border-radius: 3px 3px 0 0;
		background: linear-gradient(#bccbdc, #d8e4f1);
	}

	.caption h2 {
		flex: 1;
		padding-left: 3px;
		overflow: hidden;
		color: #505a64;
		font-size: 10px;
		line-height: 14px;
		text-overflow: ellipsis;
		white-space: pre;
	}

	.close {
		display: flex;
		align-items: center;
		justify-content: center;
		flex: none;
		width: 24px;
		height: 13px;
		border: 1px solid #93a5bb;
		border-radius: 2px;
		background: #c6d5e6;
	}

	.description {
		height: 28px;
		border: 1px solid;
		border-color: #999 #fff #fff #999;
		text-align: center;
		white-space: pre;
	}

	.slider {
		width: 136px;
		margin: 4px auto 9px 9px;
	}

	.scalar-form {
		display: grid;
		grid-template-columns: 59px 55px 40px;
		grid-template-rows: 17px 15px 16px;
	}

	.value {
		height: 16px;
		min-width: 0;
		padding-left: 4px;
		border: 1px solid;
		border-color: #999 #e4e4e4 #e4e4e4 #ccc;
		background: #fff;
	}

	.unit {
		grid-column: 2 / 4;
		padding: 5px 0 0 5px;
	}

	.compare {
		grid-column: 1 / 3;
		margin-left: -1px;
		padding-top: 2px;
		white-space: nowrap;
	}

	.compare-row {
		grid-column: 1 / 3;
		display: flex;
		gap: 2px;
	}

	.none {
		width: 59px;
		height: 16px;
		padding: 1px 0 0 4px;
		border: 1px solid;
		border-color: #aaa #fff #fff #ccc;
	}

	.copy {
		width: 30px;
	}

	.copy,
	.cancel {
		margin-top: 2px;
	}

	.flag {
		width: 237px;
		height: 99px;
		padding: 0 7px;
	}

	.flag .caption {
		margin: 0 -7px 3px;
	}

	.flag .description {
		height: 27px;
		padding-top: 2px;
		border-color: #bbb #fff #fff #ddd;
	}

	.checks {
		display: flex;
		justify-content: space-between;
		padding: 4px 9px 0 10px;
	}

	.checks label {
		display: flex;
		align-items: center;
		gap: 2px;
	}

	.checks input {
		appearance: none;
		width: 11px;
		height: 11px;
		border: 1px solid #8c8c8c;
		background: #fafafa;
	}

	.checks input:checked {
		background: #e4eaf6;
	}

	.checks input:checked::after {
		content: '✓';
		display: block;
		color: #2a4090;
		font: bold 10px/9px 'DejaVu Sans', sans-serif;
		text-align: center;
	}

	.checks input:disabled {
		border-color: #bbb;
	}

	.checks .off {
		color: #777;
	}

	.actions {
		display: flex;
		justify-content: center;
		gap: 8px;
		padding: 6px 0 0 2px;
	}

	.actions .push {
		width: 61px;
		height: 18px;
	}

	/* 3D graph window */
	.graph-window {
		position: absolute;
		top: 287px;
		left: 29px;
		display: flex;
		flex-direction: column;
		width: 880px;
		height: 550px;
		padding: 0 5px 5px;
		border: 1px solid #1c242c;
		border-radius: 6px;
		background: linear-gradient(#5f7488 0 28%, #8fa8bf 30%, #6f8598 45%, #4c5c6c 75%, #a8c4de 92%);
		box-shadow:
			inset 0 0 0 1px #b4c6d6,
			2px 3px 12px 3px rgba(0, 0, 0, 0.75);
	}

	.graph-caption {
		display: flex;
		align-items: center;
		flex: none;
		height: 23px;
		margin: 0 -4px;
		padding: 0 0 1px 4px;
		gap: 5px;
		border-radius: 5px 5px 0 0;
		background: linear-gradient(90deg, #8d9dab, #8899a8 14%, #5f7488 20%, #5f7488 88%, #8797a6);
	}

	.graph-caption h2 {
		font-size: 10px;
		line-height: 14px;
	}

	.graph-caption .sysbuttons {
		margin-right: 4px;
	}

	.graph-caption .sysbuttons .wide {
		width: 38px;
	}

	.sysbuttons .red {
		background: linear-gradient(#d88c80, #c44838 50%, #b02818 50%, #d06048);
	}

	.graph-client {
		display: flex;
		flex-direction: column;
		flex: 1;
		min-height: 0;
		border: 1px solid #5c6a78;
		background: #f0f0f0;
	}

	.graph-menu {
		display: flex;
		flex: none;
		height: 17px;
		gap: 10px;
		padding-left: 5px;
		background: linear-gradient(#fff 25%, #e4e8f4 50%, #d5dbee);
		border-bottom: 1px solid #c4c8d4;
		font-size: 10px;
	}

	.graph-tools {
		flex: none;
		height: 21px;
	}

	.graph-tools .exit {
		margin: 0 6px 0 -1px;
	}

	.graph-tools .pressed {
		height: 17px;
		border: 1px solid #555;
		border-radius: 3px;
		background: #dcdcdc;
	}

	.plot {
		position: relative;
		flex: 1;
		min-height: 0;
		background: #fff;
	}

	.plot svg {
		display: block;
		width: 100%;
		height: 100%;
	}

	.selection {
		position: absolute;
		top: 9px;
		right: 14px;
		padding: 2px 1px;
		border: 1px solid #222;
		background: #ffff9c;
		font: 9px/12px 'Liberation Sans', sans-serif;
	}

	.plot text {
		font: 8px 'Liberation Sans', sans-serif;
		text-anchor: middle;
	}

	.plot .version {
		fill: #c4c4c4;
	}

	.plot .title {
		font-size: 12px;
		font-weight: 700;
	}

	.dashed {
		fill: none;
		stroke: #999;
		stroke-width: 0.7;
		stroke-dasharray: 3 2;
	}

	.frame {
		fill: none;
		stroke: #888;
		stroke-width: 0.8;
	}

	.surface {
		stroke: #141400;
		stroke-width: 0.7;
		stroke-linejoin: round;
	}

	.plot .tick {
		fill: #3030a8;
		text-anchor: start;
	}

	.plot .tick.end {
		text-anchor: end;
	}

	.kpa {
		fill: #d03838;
	}

	.rpm {
		fill: #333;
	}

	.plot .axis {
		font-weight: 700;
		font-size: 9px;
	}

	.kpa-axis {
		fill: #c81010;
	}

	.rpm-axis {
		fill: #666;
	}

	.ve-axis {
		fill: #1818a0;
	}

	.graph-status {
		display: flex;
		flex: none;
		height: 20px;
		border-top: 1px solid #999;
		background: #f1eeee;
	}

	.graph-status i {
		width: 108px;
		border-right: 1px solid #d4d0d0;
	}

	.summary-panel {
		flex: none;
		height: 50px;
		padding: 0 6px;
		border: 1px solid #55606c;
		background: #d6e2f0;
	}

	.tabs {
		display: flex;
		align-items: flex-start;
		height: 22px;
		margin-top: 1px;
		border-top: 3px double #999;
		background: #f0f0f0;
		font-family: 'Liberation Sans', sans-serif;
	}

	.tabs button {
		height: 17px;
		padding: 0 4px;
		border: 1px solid #999;
		border-top: 0;
		background: #e4e4e4;
	}

	.tabs .active {
		height: 19px;
		padding: 0 4px;
		background: #fff;
		border-color: #fff #999 #fff #fff;
	}

	.statusbar {
		display: flex;
		align-items: center;
		flex: none;
		height: 20px;
		padding-left: 1px;
		border-top: 1px solid #666;
		background: #f1eded;
		font-size: 10px;
	}

	.statusbar span {
		height: 16px;
		line-height: 14px;
		text-align: center;
	}

	.statusbar .emulating {
		width: 73px;
		border: 1px solid #400;
		background: #e81010;
		color: #fff;
	}

	.statusbar .hardware {
		width: 165px;
	}

	.statusbar .blank {
		width: 85px;
		height: 17px;
		margin-right: 3px;
		border: 1px solid;
		border-color: #aaa #fff #fff #aaa;
	}

	.statusbar .da {
		width: 110px;
		border: 1px solid #222;
		background: #ff0;
	}

	/* taskbar */
	.taskbar {
		display: flex;
		flex: none;
		height: 33px;
		border-top: 1px solid #4c708c;
		background:
			linear-gradient(50deg, transparent 43%, #a8d8f8 47%, #a8d8f8 53%, transparent 57%) 1148px 0 / 60px 33px no-repeat,
			linear-gradient(90deg, #1f70ac, #2c84c0 8%, #2e8cd0 22%, #3494d4 40%, #2c84cc 60%, #1c62ac 75%, #1a5aa0 88%, #173f70 92%, #173a68);
	}

	.taskbar button {
		display: flex;
		align-items: center;
		justify-content: center;
		width: 53px;
	}

	.taskbar button svg {
		width: 29px;
		height: 29px;
	}

	.taskbar .start {
		width: 45px;
	}

	.taskbar .start svg {
		width: 31px;
		height: 31px;
	}

	.taskbar .running {
		width: 49px;
		margin-left: 2px;
		border: 1px solid #a4ccec;
		border-radius: 2px;
		background: linear-gradient(135deg, rgba(255, 255, 255, 0.5), rgba(255, 255, 255, 0.15));
	}

	.taskbar .current {
		background: linear-gradient(135deg, #e8f2fa, #8cc0e4);
		box-shadow: 2px 0 0 #7cb4dc;
	}

	.tray {
		display: flex;
		align-items: center;
		gap: 7px;
		margin-left: auto;
		color: #fff;
		font-size: 10px;
	}

	.tray svg {
		width: 13px;
		height: 13px;
	}

	.tray .up {
		width: 8px;
		height: 8px;
		margin-right: 4px;
	}

	.clock {
		display: flex;
		flex-direction: column;
		align-items: center;
		line-height: 14px;
		margin-left: 4px;
	}

	.taskbar .show-desktop {
		width: 11px;
		height: 32px;
		border: 1px solid #6f8cac;
		background: rgba(255, 255, 255, 0.1);
	}
</style>
